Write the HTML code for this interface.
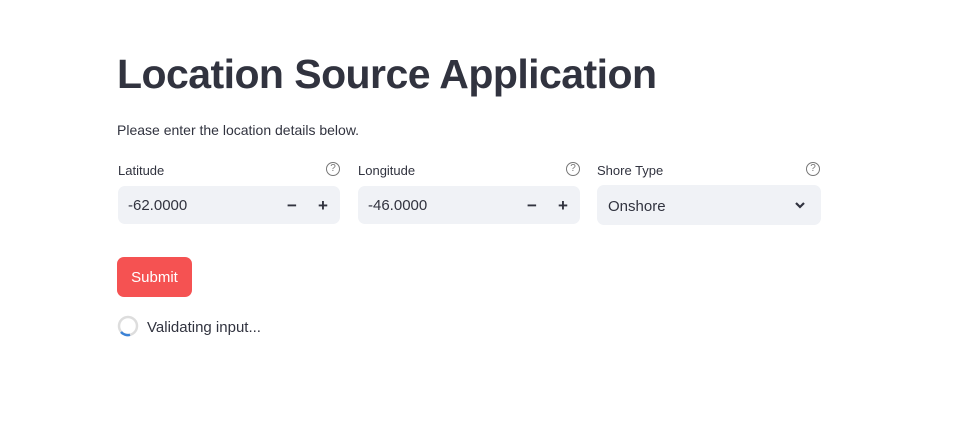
<!DOCTYPE html>
<html><head><style>
*{box-sizing:border-box;margin:0;padding:0}
body{width:975px;height:421px;background:#fff;font-family:"Liberation Sans",sans-serif;color:#31333f;position:relative;overflow:hidden}
.a{position:absolute}
h1{position:absolute;left:117px;top:51px;font-size:41px;font-weight:bold;letter-spacing:-0.55px;white-space:nowrap;color:#31333f}
.lab{font-size:13px;top:163px}
.box{top:186px;height:38px;background:#f0f2f6;border-radius:7px;font-size:15px;line-height:40px;padding-left:10px}
.help{width:14px;height:14px;border:1.3px solid #777;border-radius:50%;font-size:10px;line-height:12px;text-align:center;color:#777;top:162px}
.pm{font-size:17px;font-weight:bold;top:187px;line-height:38px}
</style></head><body>
<h1>Location Source Application</h1>
<div class="a" style="left:117px;top:122px;font-size:14px">Please enter the location details below.</div>

<div class="a lab" style="left:118px">Latitude</div>
<div class="a help" style="left:326px">?</div>
<div class="a box" style="left:118px;width:222px">-62.0000</div>
<div class="a pm" style="left:287px">−</div>
<div class="a pm" style="left:318px">+</div>

<div class="a lab" style="left:358px">Longitude</div>
<div class="a help" style="left:566px">?</div>
<div class="a box" style="left:358px;width:222px">-46.0000</div>
<div class="a pm" style="left:527px">−</div>
<div class="a pm" style="left:558px">+</div>

<div class="a lab" style="left:597px">Shore Type</div>
<div class="a help" style="left:806px">?</div>
<div class="a box" style="left:597px;top:185px;height:40px;line-height:43px;width:224px;padding-left:11px">Onshore</div>
<svg class="a" style="left:794px;top:201px" width="12" height="9" viewBox="0 0 12 9"><path d="M2 2l4 4 4-4" stroke="#31333f" stroke-width="2.2" fill="none"/></svg>

<div class="a" style="left:117px;top:257px;width:75px;height:40px;background:#f55252;border-radius:7px;color:#fff;font-size:15px;line-height:42px;text-align:center">Submit</div>

<svg class="a" style="left:117px;top:315px" width="22" height="22" viewBox="0 0 22 22"><circle cx="11" cy="11" r="9" stroke="#ddd" stroke-width="2.5" fill="none"/><path d="M4 17A9 9 0 0 0 13 19.8" stroke="#3b82d6" stroke-width="2.5" fill="none"/></svg>
<div class="a" style="left:147px;top:319px;font-size:15px">Validating input...</div>
</body></html>
